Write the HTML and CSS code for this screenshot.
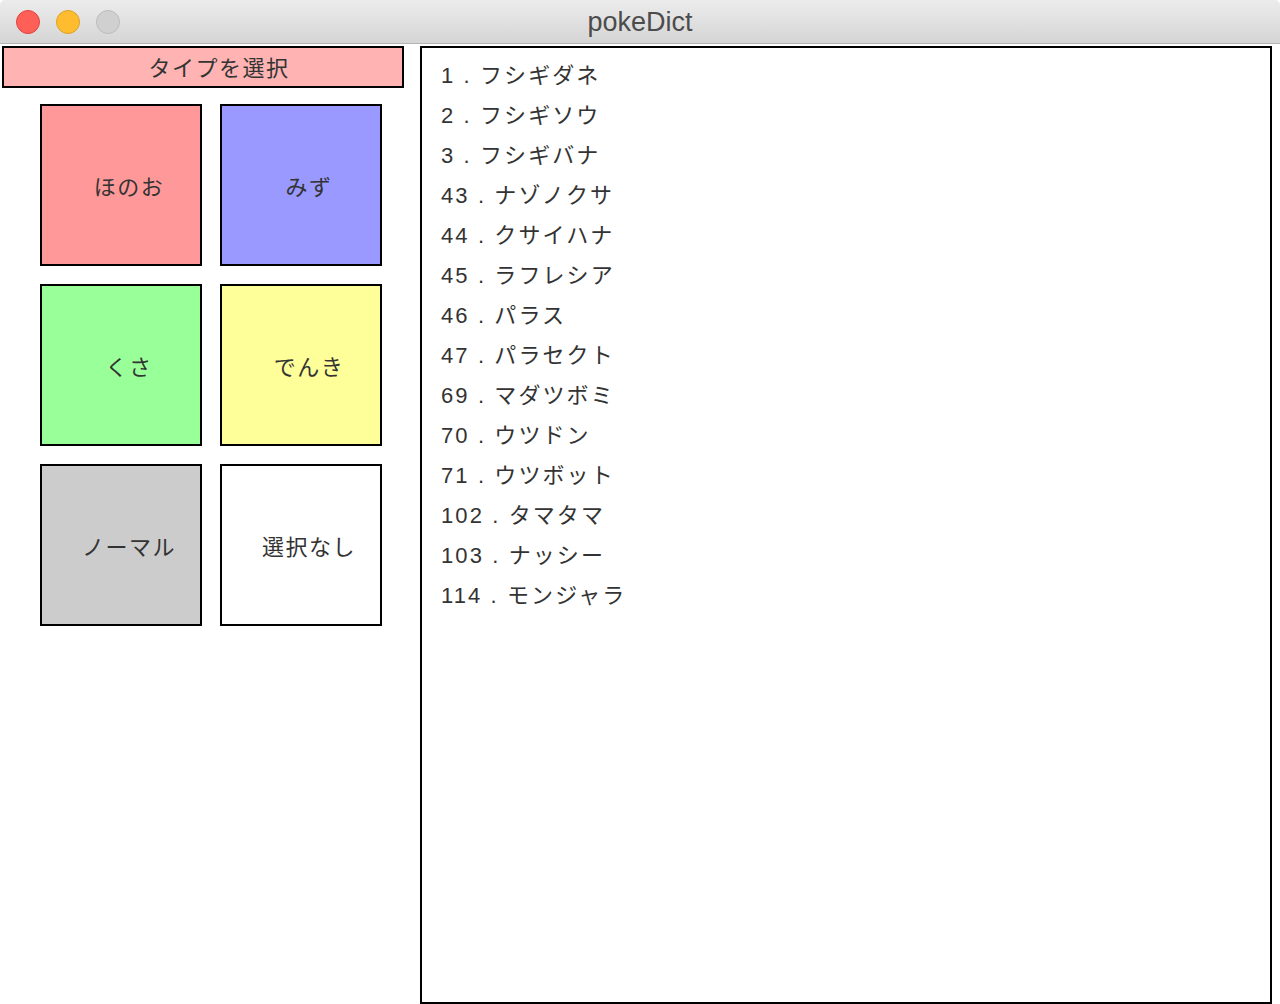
FILE: index.html
```html
<!DOCTYPE html>
<html lang="ja">
<head>
<meta charset="utf-8">
<title>pokeDict</title>
<link rel="stylesheet" href="styles.css">
</head>
<body>
<div class="titlebar">
  <div class="lights">
    <span class="light red"></span>
    <span class="light yellow"></span>
    <span class="light gray"></span>
  </div>
  <div class="title">pokeDict</div>
</div>
<div class="main">
  <div class="left">
    <div class="header">タイプを選択</div>
    <div class="grid">
      <div class="btn fire">ほのお</div>
      <div class="btn water">みず</div>
      <div class="btn grass">くさ</div>
      <div class="btn elec">でんき</div>
      <div class="btn normal">ノーマル</div>
      <div class="btn none">選択なし</div>
    </div>
  </div>
  <div class="list">
    <div class="item">1 . フシギダネ</div>
    <div class="item">2 . フシギソウ</div>
    <div class="item">3 . フシギバナ</div>
    <div class="item">43 . ナゾノクサ</div>
    <div class="item">44 . クサイハナ</div>
    <div class="item">45 . ラフレシア</div>
    <div class="item">46 . パラス</div>
    <div class="item">47 . パラセクト</div>
    <div class="item">69 . マダツボミ</div>
    <div class="item">70 . ウツドン</div>
    <div class="item">71 . ウツボット</div>
    <div class="item">102 . タマタマ</div>
    <div class="item">103 . ナッシー</div>
    <div class="item">114 . モンジャラ</div>
  </div>
</div>
</body>
</html>
```
FILE: styles.css
```css
html, body {
  margin: 0;
  padding: 0;
  background: #ffffff;
  width: 1280px;
  height: 1004px;
  overflow: hidden;
  font-family: "Liberation Sans", "Noto Sans CJK JP", sans-serif;
}
.titlebar {
  position: relative;
  height: 43px;
  border-bottom: 1px solid #b4b4b4;
  background: linear-gradient(#ececec, #d5d5d5);
  border-radius: 5px 5px 0 0;
  display: flex;
  align-items: center;
  justify-content: center;
}
.lights {
  position: absolute;
  left: 16px;
  top: 10px;
  display: flex;
  gap: 16px;
}
.light {
  width: 24px;
  height: 24px;
  border-radius: 50%;
  box-sizing: border-box;
  display: block;
}
.red { background: #fe5f57; border: 1px solid #e0443e; }
.yellow { background: #febc2e; border: 1px solid #dea123; }
.gray { background: #d0d0d0; border: 1px solid #bcbcbc; }
.title {
  font-family: "Liberation Sans", "Noto Sans", sans-serif;
  font-size: 27px;
  color: #4c4c4c;
  margin-top: 2px;
}
.main {
  display: flex;
  margin-top: 2px;
}
.left {
  width: 402px;
  margin-left: 2px;
}
.header {
  height: 36px;
  border: 2px solid #000;
  background: #ffb3b3;
  display: flex;
  align-items: center;
  justify-content: center;
  padding: 0 0 2px 32px;
  box-sizing: content-box;
  width: 366px;
  font-size: 22px;
  letter-spacing: 1.5px;
  color: #333;
  font-family: "Noto Sans CJK JP", sans-serif;
}
.grid {
  margin: 16px 0 0 38px;
  display: grid;
  grid-template-columns: 162px 162px;
  gap: 18px;
}
.btn {
  height: 158px;
  width: 142px;
  border: 2px solid #000;
  display: flex;
  align-items: center;
  justify-content: center;
  padding-left: 16px;
  box-sizing: content-box;
  font-size: 22px;
  letter-spacing: 1.5px;
  color: #333;
  font-family: "Noto Sans CJK JP", sans-serif;
}
.fire { background: #ff9999; }
.water { background: #9999ff; }
.grass { background: #99ff99; }
.elec { background: #ffff99; }
.normal { background: #cccccc; }
.none { background: #ffffff; }
.list {
  margin-left: 16px;
  border: 2px solid #000;
  padding: 8px 0 0 19px;
  box-sizing: content-box;
  width: 829px;
  height: 946px;
}
.item {
  height: 40px;
  line-height: 40px;
  font-size: 22px;
  letter-spacing: 2.1px;
  color: #333;
  white-space: pre;
}
```
